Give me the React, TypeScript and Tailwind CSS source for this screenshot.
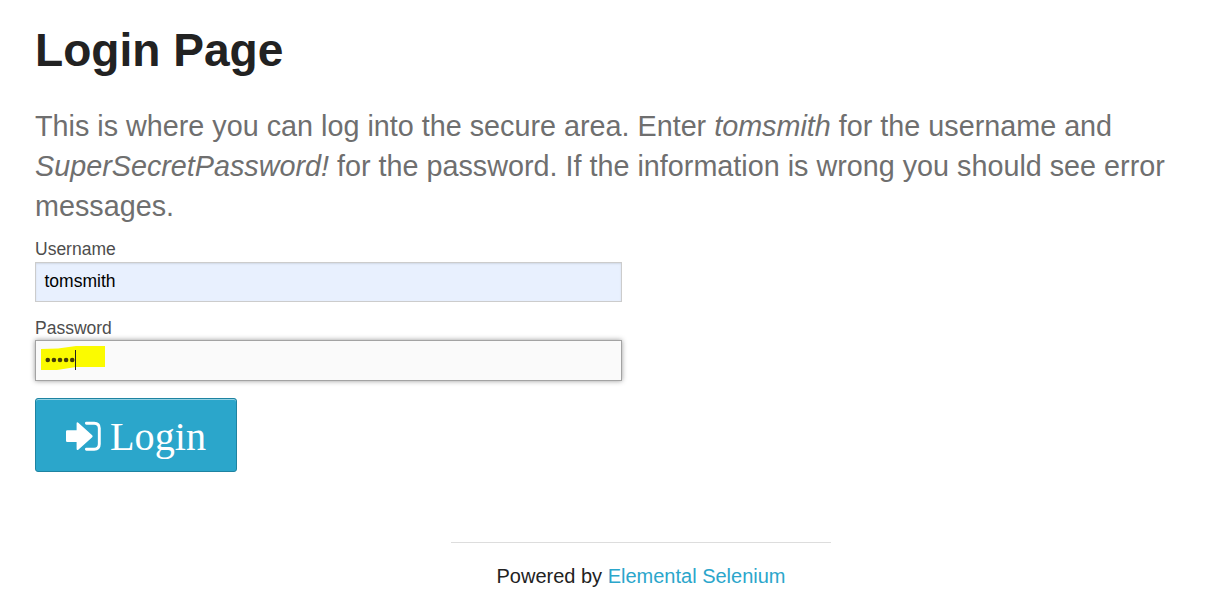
function SignInIcon() {
  return (
    <svg className="mt-[3px] h-[31px] w-[36px] shrink-0" viewBox="0 0 36 31" fill="none">
      <path d="M1.3 9.3H10.6V2.6Q10.6 .6 12.3 1.7L26.2 14.2Q27.2 15.2 26.2 16.2L12.3 28.7Q10.6 29.8 10.6 27.8V21.1H1.3Q0 21.1 0 19.8V10.6Q0 9.3 1.3 9.3Z" fill="white" />
      <path d="M20.4 2.2H28.2Q33.3 2.2 33.3 7.3V23.1Q33.3 28.2 28.2 28.2H20.4" stroke="white" strokeWidth="2.9" strokeLinecap="round" />
    </svg>
  );
}

export default function App() {
  return (
    <main className="flex h-[611px] flex-col overflow-hidden bg-white pl-[35px] pt-[22px] font-['Liberation_Sans',Arial,sans-serif] text-[#222]">
      <h1 className="h-[84px] text-[46.1px] font-bold leading-[56px]">Login Page</h1>
      <h2 className="w-[1150px] text-[28.75px] leading-[40px] text-[#6f6f6f]">
        <span className="block whitespace-nowrap">This is where you can log into the secure area. Enter <em>tomsmith</em> for the username and</span>
        <span className="block whitespace-nowrap"><em>SuperSecretPassword!</em> for the password. If the information is wrong you should see error</span>
        <span className="block">messages.</span>
      </h2>
      <form className="mt-[10px] flex w-[587px] flex-col items-start">
        <label className="h-[26px] text-[17.5px] leading-[26px] text-[#4d4d4d]">Username</label>
        <div className="h-[40px] w-full border border-[#ccc] bg-[#e8f0fe] pl-[8.5px] text-[17.5px] leading-[37px] text-black shadow-[inset_0_1px_2px_rgba(0,0,0,0.1)]">tomsmith</div>
        <label className="mt-[13px] h-[25px] text-[17.5px] leading-[26px] text-[#4d4d4d]">Password</label>
        <div className="relative h-[41px] w-full border border-[#a3a3a3] bg-[#fafafa] shadow-[0_0_5px_#999]">
          <svg className="absolute left-0 top-0" width="80" height="39">
            <path d="M5 8 L22 7.5 L40 5 L69 5 L69 26 L40 26 L21 29 L5 29Z" fill="#fbfb00" />
            <g fill="#443d08"><circle cx="11.8" cy="19" r="2.3"/><circle cx="17.9" cy="19" r="2.3"/><circle cx="24" cy="19" r="2.3"/><circle cx="30.1" cy="19" r="2.3"/><circle cx="36.2" cy="19" r="2.3"/></g>
            <path d="M39.5 9V29" stroke="#222" />
          </svg>
        </div>
        <button type="button" className="mt-[17px] flex h-[74px] w-[202px] items-center rounded-[3px] border border-[#1e83a1] bg-[#2ba6cb] pl-[30px] text-white shadow-[inset_0_1px_0_rgba(255,255,255,0.5)]">
          <SignInIcon />
          <span className="ml-[8px] mt-[4px] font-['Liberation_Serif',serif] text-[40.2px] leading-[72px]">Login</span>
        </button>
      </form>
      <footer className="ml-[416px] mt-[70px] w-[380px] border-t border-[#ddd] pt-[18px] text-center text-[20px] leading-[30px]">Powered by <a className="text-[#2ba6cb]">Elemental Selenium</a></footer>
    </main>
  );
}
